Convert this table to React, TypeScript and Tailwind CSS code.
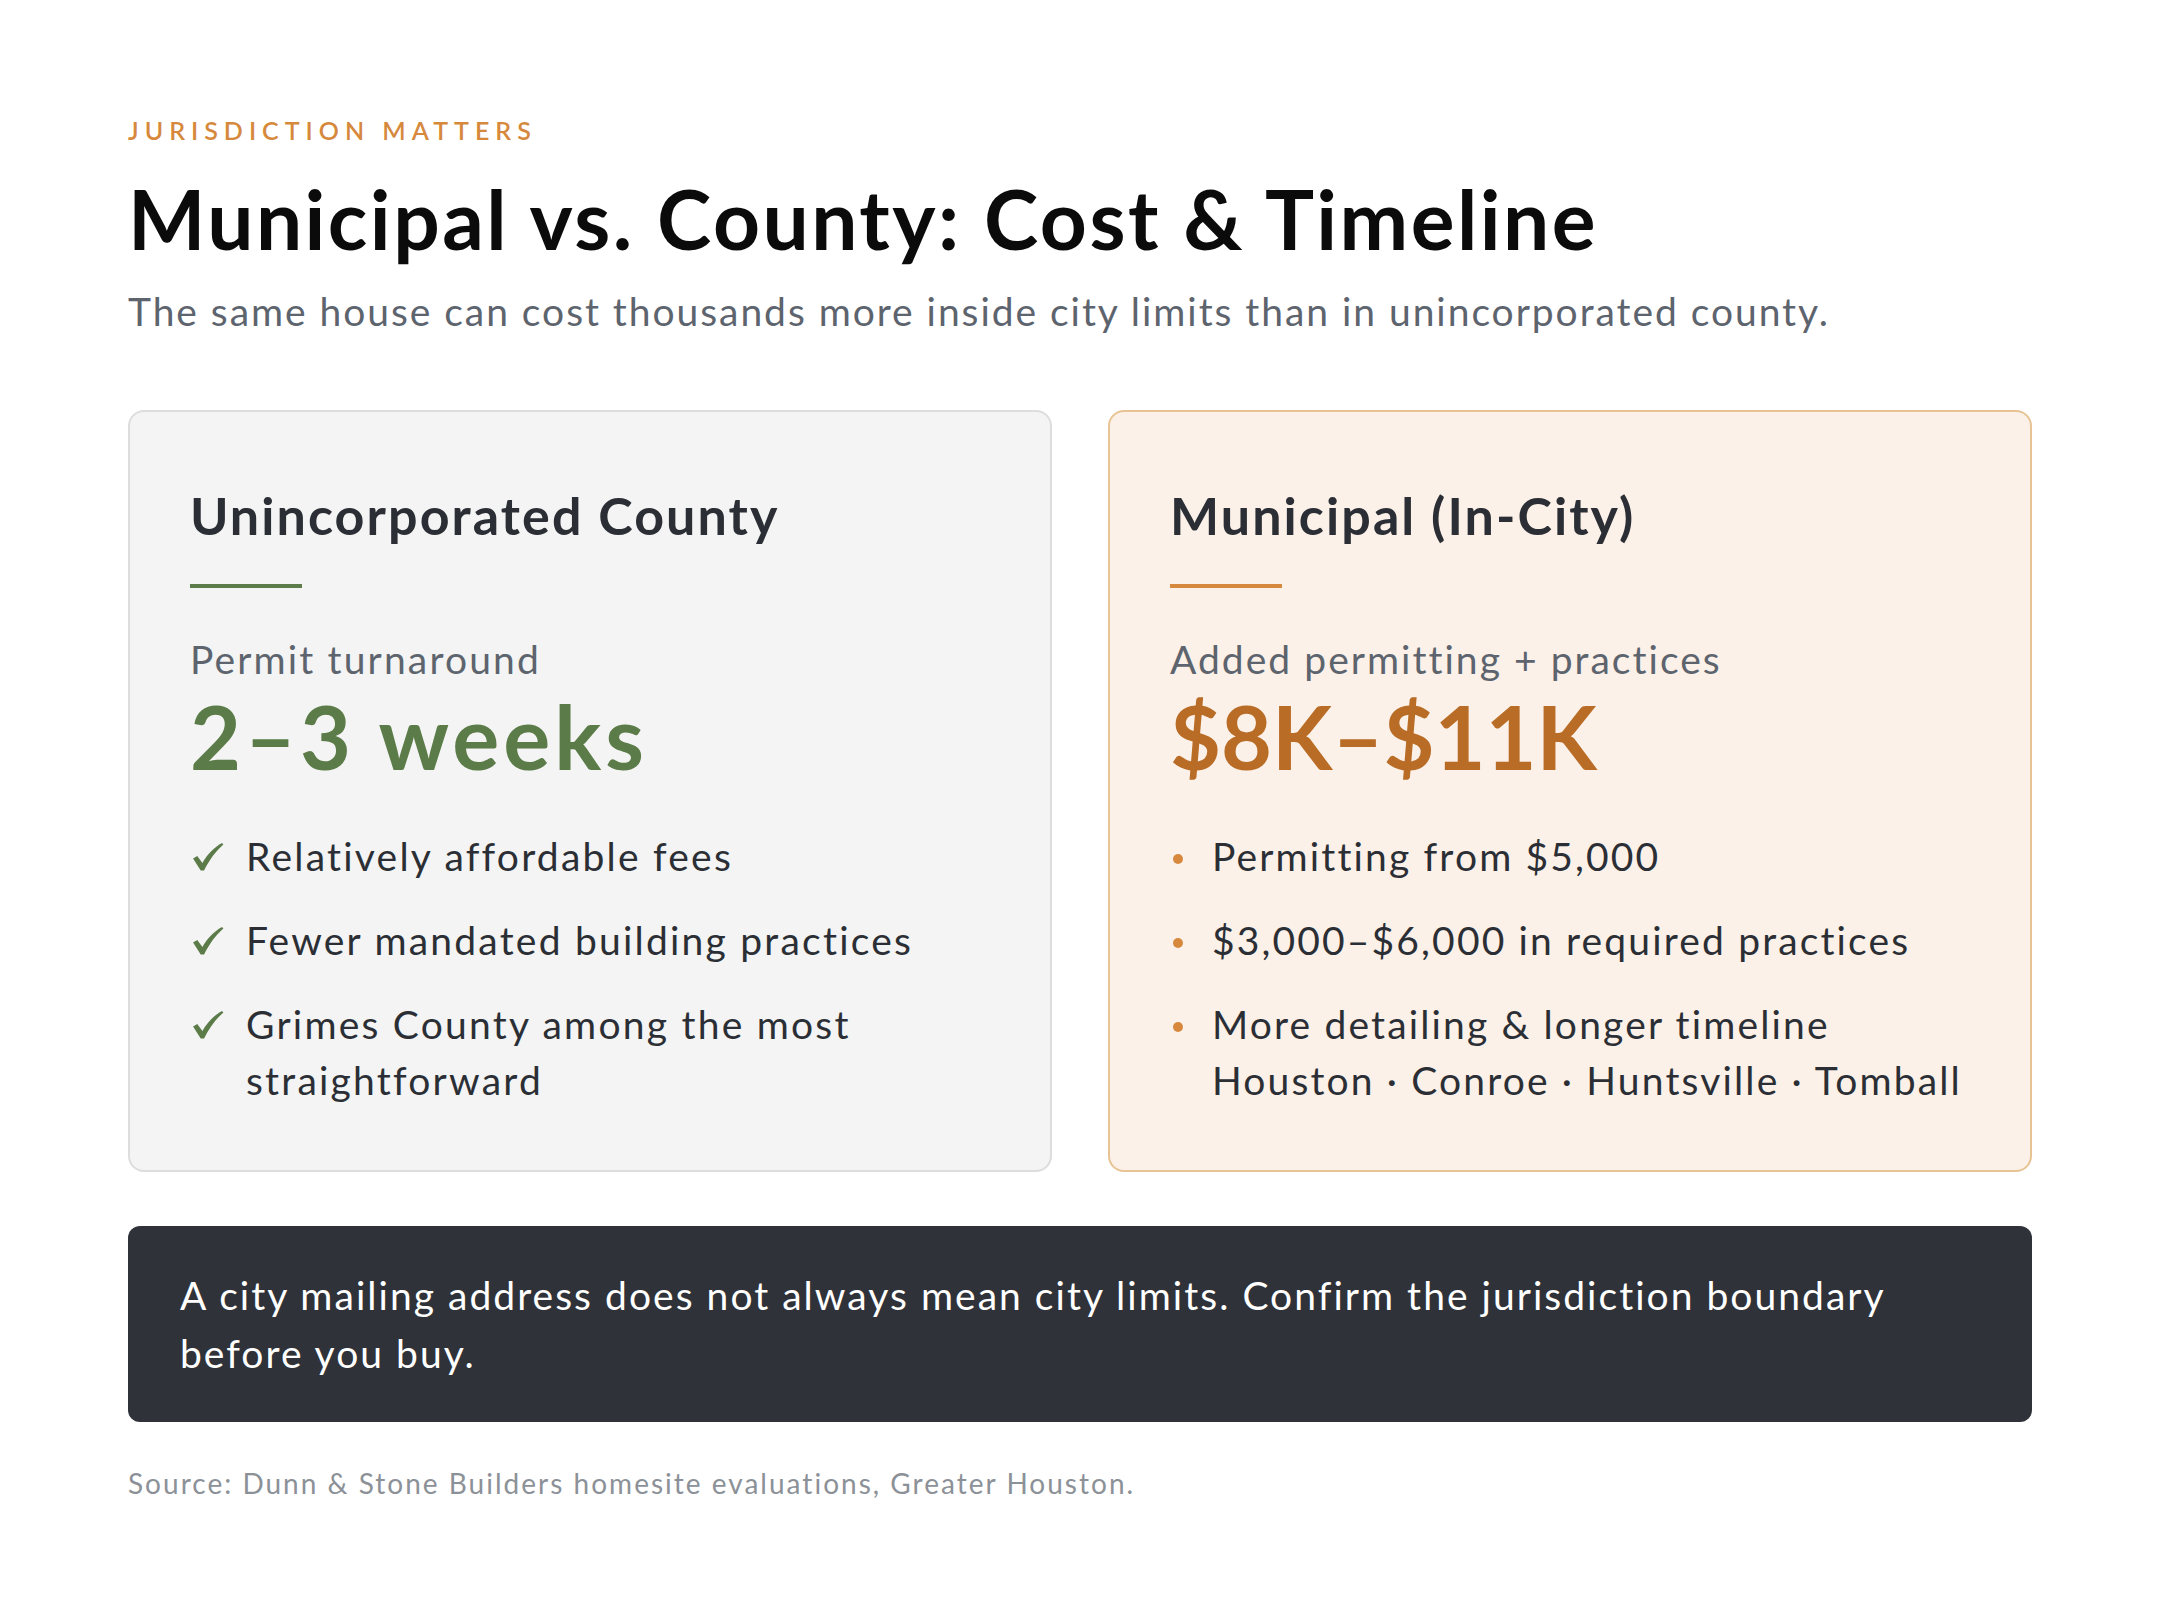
import React from 'react';

type Item = { text: React.ReactNode };

const countyItems: Item[] = [
  { text: 'Relatively affordable fees' },
  { text: 'Fewer mandated building practices' },
  { text: <>Grimes County among the most<br />straightforward</> },
];

const cityItems: Item[] = [
  { text: 'Permitting from $5,000' },
  { text: '$3,000–$6,000 in required practices' },
  { text: <>More detailing &amp; longer timeline<br />Houston · Conroe · Huntsville · Tomball</> },
];

const Check: React.FC = () => (
  <svg viewBox="0 0 34 30" className="mt-[15px] ml-[2px] h-[28px] w-[32px]" fill="#5b7b48">
    <path d="M1 16.5 L5.5 13.8 L11 21.5 C16 12.5 23 5 32 0 L33.5 1.6 C25 9 18.5 18 12.8 29.5 L9.2 29.5 Z" />
  </svg>
);

const App: React.FC = () => {
  return (
    <div className="min-h-screen bg-white font-['Lato','Liberation_Sans',sans-serif]">
      <div className="px-[128px] pt-[115px] pb-[80px]">
        {/* Header */}
        <div className="text-[25px] leading-[30px] font-semibold tracking-[0.24em] uppercase text-[#d6893c]">
          Jurisdiction Matters
        </div>
        <h1 className="mt-[28px] text-[82px] leading-[90px] font-bold tracking-[0.03em] text-[#0b0b0c]">
          Municipal vs. County: Cost &amp; Timeline
        </h1>
        <p className="mt-[24px] text-[39px] leading-[48px] tracking-[0.05em] text-[#5d646e]">
          The same house can cost thousands more inside city limits than in unincorporated county.
        </p>

        {/* Comparison cards */}
        <div className="mt-[75px] grid grid-cols-2 gap-[56px]">
          <div className="rounded-[16px] border-2 border-[#dcdddc] bg-[#f3f4f3] px-[60px] pt-[72px] pb-[62px]">
            <h2 className="text-[52px] leading-[62px] font-bold tracking-[0.04em] text-[#2b2f35]">Unincorporated County</h2>
            <div className="mt-[38px] h-[4px] w-[112px] bg-[#5b7b48]" />
            <div className="mt-[47px] text-[39px] leading-[48px] tracking-[0.055em] text-[#5d646e]">Permit turnaround</div>
            <div className="mt-[9px] text-[88px] leading-[88px] font-bold tracking-[0.045em] text-[#5b7b48]">2–3 weeks</div>
            <ul className="mt-[48px] flex flex-col gap-[28px]">
              {countyItems.map((item, i) => (
                <li key={i} className="flex text-[39px] leading-[56px] tracking-[0.057em] text-[#2b2f35]">
                  <span className="w-[56px] shrink-0">
                    <Check />
                  </span>
                  <span>{item.text}</span>
                </li>
              ))}
            </ul>
          </div>

          <div className="rounded-[16px] border-2 border-[#e8c495] bg-[#fbf1e8] px-[60px] pt-[72px] pb-[62px]">
            <h2 className="text-[52px] leading-[62px] font-bold tracking-[0.04em] text-[#2b2f35]">Municipal (In-City)</h2>
            <div className="mt-[38px] h-[4px] w-[112px] bg-[#d6893c]" />
            <div className="mt-[47px] text-[39px] leading-[48px] tracking-[0.052em] text-[#5d646e]">Added permitting + practices</div>
            <div className="mt-[9px] text-[88px] leading-[88px] font-bold text-[#b96c25]">$8K–$11K</div>
            <ul className="mt-[48px] flex flex-col gap-[28px]">
              {cityItems.map((item, i) => (
                <li key={i} className="flex text-[39px] leading-[56px] tracking-[0.055em] text-[#2b2f35]">
                  <span className="w-[42px] shrink-0 flex h-[56px] items-center pl-[3px] pt-[6px]">
                    <span className="block h-[10px] w-[10px] rounded-full bg-[#d6893c]" />
                  </span>
                  <span>{item.text}</span>
                </li>
              ))}
            </ul>
          </div>
        </div>

        {/* Callout */}
        <div className="mt-[54px] rounded-[12px] bg-[#2f3238] px-[52px] py-[40px]">
          <p className="max-w-[1730px] text-[39px] leading-[58px] tracking-[0.052em] text-white">
            A city mailing address does not always mean city limits. Confirm the jurisdiction boundary before you buy.
          </p>
        </div>

        <p className="mt-[43px] text-[28px] leading-[36px] tracking-[0.072em] text-[#8c9198]">
          Source: Dunn &amp; Stone Builders homesite evaluations, Greater Houston.
        </p>
      </div>
    </div>
  );
};

export default App;
